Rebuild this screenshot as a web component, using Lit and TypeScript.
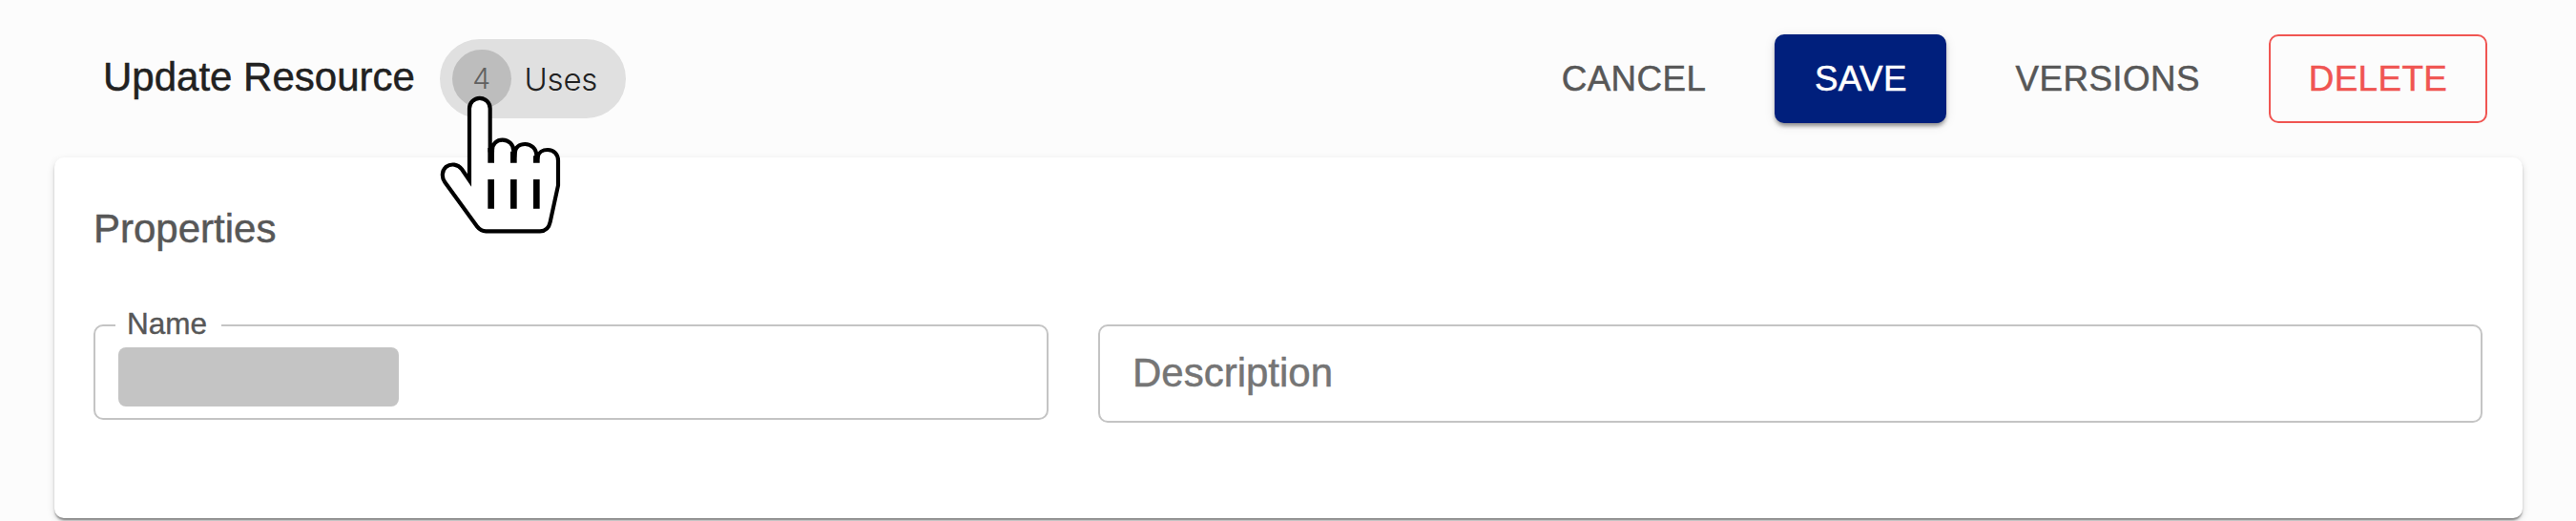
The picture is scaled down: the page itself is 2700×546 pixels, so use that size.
import { css, html, LitElement } from "lit";
import { customElement, property } from "lit/decorators.js";

@customElement("app-button")
class AppButtonElement extends LitElement {
  @property({ reflect: true })
  variant: string = "text";

  render() {
    return html`<button><slot></slot></button>`;
  }

  static styles = css`
    :host {
      display: block;
    }
    button {
      box-sizing: border-box;
      display: block;
      height: 93px;
      padding: 0 41px;
      border: none;
      border-radius: 10px;
      background: none;
      color: #575757;
      font: 36.75px "Liberation Sans", Arial, sans-serif;
      letter-spacing: 0.45px;
      text-transform: uppercase;
      white-space: nowrap;
      cursor: pointer;
      -webkit-text-stroke: 0.5px;
    }
    :host([variant="contained"]) button {
      width: 180px;
      padding: 0;
      color: #fff;
      background-color: #001f7c;
      box-shadow: 0 5px 5px -3px rgba(0, 0, 0, 0.3), 0 3px 4px rgba(0, 0, 0, 0.2),
        0 2px 12px rgba(0, 0, 0, 0.1);
    }
    :host([variant="outlined"]) button {
      width: 229px;
      padding: 0;
      color: #f05552;
      border: 2.5px solid #f05552;
    }
  `;
}

@customElement("uses-chip")
class UsesChipElement extends LitElement {
  @property({ type: Number })
  count: number = 0;

  render() {
    return html`
      <span class="avatar">${this.count}</span>
      <span class="label">Uses</span>
      <svg class="pointer" viewBox="60 240 390 440">
        <path
          class="hand"
          d="M156 507V281A32.5 32.5 0 0 1 221 281V412H228C228 392 242 380 260 380C279 380 295 394 295 415L299 420C301 403 313 393 331 393C350 393 367 407 367 430L371 432C374 419 386 411 402 411C423 411 435 427 435 445V523L410 638Q404 667 378 667H208Q192 667 181 653L79 513C68 498 69 477 82 465C98 453 120 456 132 472Z"
        />
        <path class="bar" d="M224 405V452M295 416V452M367 430V452M224 504V596M295 504V596M367 504V596" />
      </svg>
    `;
  }

  static styles = css`
    :host {
      position: relative;
      display: flex;
      align-items: center;
      box-sizing: border-box;
      width: 195px;
      height: 83px;
      padding-left: 13px;
      border-radius: 42px;
      background-color: #e0e0e0;
      font-family: Inter, "Liberation Sans", sans-serif;
      font-weight: 300;
    }
    .avatar {
      width: 61.5px;
      line-height: 61.5px;
      border-radius: 50%;
      background-color: #bdbdbd;
      color: #616161;
      font-size: 30px;
      text-align: center;
    }
    .label {
      margin-left: 14px;
      color: #212121;
      font-size: 33px;
      letter-spacing: -0.2px;
    }
    /* floats over the chip and the card below */
    .pointer {
      position: absolute;
      left: -1px;
      top: 59px;
      width: 130px;
      height: 146.67px;
      z-index: 1;
    }
    .hand {
      fill: #fff;
      stroke: #000;
      stroke-width: 12.5;
    }
    .bar {
      fill: none;
      stroke: #000;
      stroke-width: 20;
    }
  `;
}

@customElement("app-root")
class AppRootElement extends LitElement {
  render() {
    return html`
      <header>
        <h1>Update Resource</h1>
        <uses-chip count="4"></uses-chip>
        <div class="actions">
          <app-button>Cancel</app-button>
          <app-button variant="contained">Save</app-button>
          <app-button>Versions</app-button>
          <app-button variant="outlined">Delete</app-button>
        </div>
      </header>
      <section>
        <h2>Properties</h2>
        <div class="fields">
          <fieldset>
            <legend>Name</legend>
            <div class="redacted"></div>
          </fieldset>
          <div class="description">Description</div>
        </div>
      </section>
    `;
  }

  static styles = css`
    :host {
      display: block;
      box-sizing: border-box;
      height: 546px;
      padding: 0 56.5px 0 57px;
      overflow: hidden;
      background-color: #fcfcfc;
      font-family: "Liberation Sans", Arial, sans-serif;
    }
    header {
      display: flex;
      align-items: center;
      box-sizing: border-box;
      height: 165px;
      padding: 0 36.5px 0 51px;
    }
    h1,
    h2 {
      margin: 0;
      font-size: 42px;
      font-weight: 400;
      line-height: 48px;
      -webkit-text-stroke: 0.5px;
    }
    h1 {
      width: 353px;
      padding-bottom: 4px;
      color: #212121;
      white-space: nowrap;
    }
    .actions {
      display: flex;
      gap: 31px;
      margin-left: auto;
    }
    section {
      box-sizing: border-box;
      height: 378px;
      padding: 51px 41.5px 0 41px;
      border-radius: 10px;
      background-color: #fff;
      box-shadow: 0 5px 3px -3px rgba(0, 0, 0, 0.2), 0 3px 3px rgba(0, 0, 0, 0.14),
        0 3px 8px rgba(0, 0, 0, 0.12), 0 2px 1px rgba(0, 0, 0, 0.15);
    }
    h2 {
      color: #575757;
    }
    .fields {
      display: grid;
      grid-template-columns: 1001px 1fr;
      gap: 52px;
      align-items: start;
      margin-top: 59px;
    }
    fieldset {
      box-sizing: border-box;
      height: 117px;
      margin: 0;
      padding: 0 24px;
      border: 2px solid #c4c4c4;
      border-radius: 10px;
    }
    legend {
      margin-left: -3px;
      padding: 0 15px 4px 12px;
      color: #575757;
      font-size: 31.5px;
      line-height: 32px;
      -webkit-text-stroke: 0.4px;
    }
    .redacted {
      width: 294px;
      height: 62px;
      margin-top: 5px;
      border-radius: 8px;
      background-color: #c4c4c4;
    }
    .description {
      box-sizing: border-box;
      height: 103px;
      margin-top: 17px;
      padding-left: 34px;
      border: 2.5px solid #c4c4c4;
      border-radius: 10px;
      color: #757575;
      font-size: 42px;
      line-height: 98px;
      -webkit-text-stroke: 0.5px;
    }
  `;
}
